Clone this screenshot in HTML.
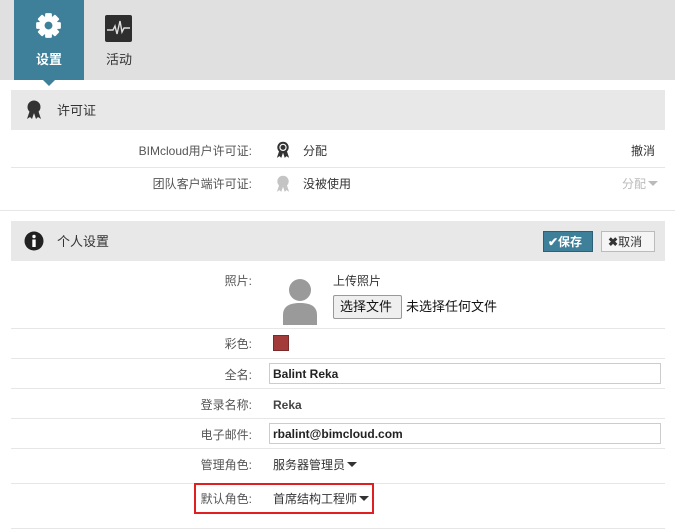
<!DOCTYPE html>
<html><head><meta charset="utf-8"><style>
*{margin:0;padding:0;box-sizing:border-box}
body{width:675px;height:532px;overflow:hidden;background:#fff;font-family:"Liberation Sans","Noto Sans CJK SC",sans-serif;font-size:12px;line-height:14px;color:#333;position:relative}
.top{position:absolute;left:0;top:0;width:675px;height:80px;background:#e0e0e0}
.tab{position:absolute;top:0;width:70px;height:80px;text-align:center;font-size:13px}
.tab .lbl{position:absolute;top:53px;left:0;width:70px}
.a{left:14px;background:#3e7f9a;color:#fff;font-weight:bold}
.ptr{position:absolute;left:43px;top:80px;width:0;height:0;border-left:6px solid transparent;border-right:6px solid transparent;border-top:6px solid #3e7f9a}
.abs{position:absolute}
.hdr{position:absolute;left:11px;width:654px;height:40px;background:#e8e8e8;font-size:13px}
.hdr span{position:absolute;left:46px;top:14px}
.line{position:absolute;left:11px;width:654px;height:1px;background:#e6e6e6}
.lab{position:absolute;right:423px;text-align:right;color:#555}
.val{position:absolute;left:273px}
.inp{position:absolute;left:269px;width:392px;height:21px;border:1px solid #ccc;font-weight:bold;padding:3px 3px;font-size:12px;color:#222}
.tri{display:inline-block;width:0;height:0;border-left:5px solid transparent;border-right:5px solid transparent;border-top:5px solid #333;vertical-align:2px;margin-left:2px}
</style></head><body>
<div class="top"></div>
<div class="tab a">
<svg class="abs" style="left:21px;top:12px" width="27" height="27" viewBox="0 0 24 24"><g fill="#fff"><circle cx="12" cy="12" r="8.5"/><rect x="9" y="1" width="6" height="22" rx="1"/><rect x="9" y="1" width="6" height="22" rx="1" transform="rotate(45 12 12)"/><rect x="9" y="1" width="6" height="22" rx="1" transform="rotate(90 12 12)"/><rect x="9" y="1" width="6" height="22" rx="1" transform="rotate(135 12 12)"/></g><circle cx="12" cy="12" r="3.5" fill="#3e7f9a"/></svg>
<div class="lbl">设置</div></div>
<div class="ptr"></div>
<div class="tab" style="left:84px;color:#333">
<svg class="abs" style="left:21px;top:15px" width="27" height="27" viewBox="0 0 27 27"><rect width="27" height="27" rx="2" fill="#2e2e2e"/><path d="M2 15H8L10 11L12 19L15 6L17 17L19 13H25" stroke="#ddd" stroke-width="1.4" fill="none"/></svg>
<div class="lbl">活动</div></div>

<div class="hdr" style="top:90px">
<svg class="abs" style="left:15px;top:10px" width="16" height="20" viewBox="0 0 16 20"><path d="M4 10L1 19L4 17L6 19L8 13L10 19L12 17L15 19L12 10Z" fill="#333"/><circle cx="8" cy="7" r="6.5" fill="#333"/></svg>
<span>许可证</span></div>
<div class="lab" style="top:144px">BIMcloud用户许可证:</div>
<svg class="abs" style="left:276px;top:141px" width="14" height="18" viewBox="0 0 16 20"><path d="M4 10L1 19L4 17L6 19L8 13L10 19L12 17L15 19L12 10Z" fill="#333"/><circle cx="8" cy="7" r="6.5" fill="#333"/><circle cx="8" cy="7" r="3.5" fill="none" stroke="#fff" stroke-width="1.3"/></svg>
<div class="val" style="left:303px;top:144px">分配</div>
<div class="abs" style="right:20px;top:144px">撤消</div>
<div class="line" style="top:167px"></div>
<div class="lab" style="top:177px">团队客户端许可证:</div>
<svg class="abs" style="left:276px;top:175px" width="14" height="18" viewBox="0 0 16 20"><path d="M4 10L1 19L4 17L6 19L8 13L10 19L12 17L15 19L12 10Z" fill="#c4c4c4"/><circle cx="8" cy="7" r="6.5" fill="#c4c4c4"/></svg>
<div class="val" style="left:303px;top:177px">没被使用</div>
<div class="abs" style="right:17px;top:177px;color:#bbb">分配<span class="tri" style="border-top-color:#bbb"></span></div>
<div class="abs" style="left:0;top:210px;width:675px;height:1px;background:#e6e6e6"></div>

<div class="hdr" style="top:221px">
<svg class="abs" style="left:13px;top:10px" width="20" height="20" viewBox="0 0 20 20"><circle cx="10" cy="10" r="9.5" fill="#222"/><circle cx="10" cy="5.5" r="1.7" fill="#fff"/><rect x="8.3" y="8.5" width="3.4" height="7.5" fill="#fff"/></svg>
<span>个人设置</span>
<div class="abs" style="left:532px;top:10px;width:50px;height:21px;background:#3e7f9a;border:1px solid #2d6078;color:#fff;font-weight:bold;font-size:12px;padding:3px 0 0 4px">✔保存</div>
<div class="abs" style="left:590px;top:10px;width:54px;height:21px;background:#f5f5f5;border:1px solid #bbb;color:#333;font-size:12px;padding:3px 0 0 6px"><b>✖</b>取消</div>
</div>
<div class="lab" style="top:274px">照片:</div>
<svg class="abs" style="left:282px;top:275px" width="36" height="50" viewBox="0 0 36 50"><circle cx="18" cy="15" r="11" fill="#9a9a9a"/><path d="M1 50V40C1 31 8 28 18 28C28 28 35 31 35 40V50Z" fill="#9a9a9a"/></svg>
<div class="abs" style="left:333px;top:274px">上传照片</div>
<div class="abs" style="left:333px;top:295px;width:69px;height:24px;border:1px solid #999;background:#efefef;border-radius:2px;font-size:13px;padding:4px 0 0 6px;color:#111">选择文件</div>
<div class="abs" style="left:406px;top:300px;font-size:13px;color:#111">未选择任何文件</div>
<div class="line" style="top:328px"></div>
<div class="lab" style="top:337px">彩色:</div>
<div class="abs" style="left:273px;top:335px;width:16px;height:16px;background:#a33b3b;border:1px solid #7a2a2a"></div>
<div class="line" style="top:358px"></div>
<div class="lab" style="top:368px">全名:</div>
<div class="inp" style="top:363px">Balint Reka</div>
<div class="line" style="top:388px"></div>
<div class="lab" style="top:398px">登录名称:</div>
<div class="val" style="top:398px;font-weight:bold;color:#444">Reka</div>
<div class="line" style="top:418px"></div>
<div class="lab" style="top:428px">电子邮件:</div>
<div class="inp" style="top:423px">rbalint@bimcloud.com</div>
<div class="line" style="top:448px"></div>
<div class="lab" style="top:458px">管理角色:</div>
<div class="val" style="top:458px">服务器管理员<span class="tri"></span></div>
<div class="line" style="top:483px"></div>
<div class="abs" style="left:194px;top:483px;width:180px;height:31px;border:2px solid #e02020"></div>
<div class="lab" style="top:492px">默认角色:</div>
<div class="val" style="top:492px">首席结构工程师<span class="tri"></span></div>
<div class="line" style="top:528px"></div>
</body></html>
